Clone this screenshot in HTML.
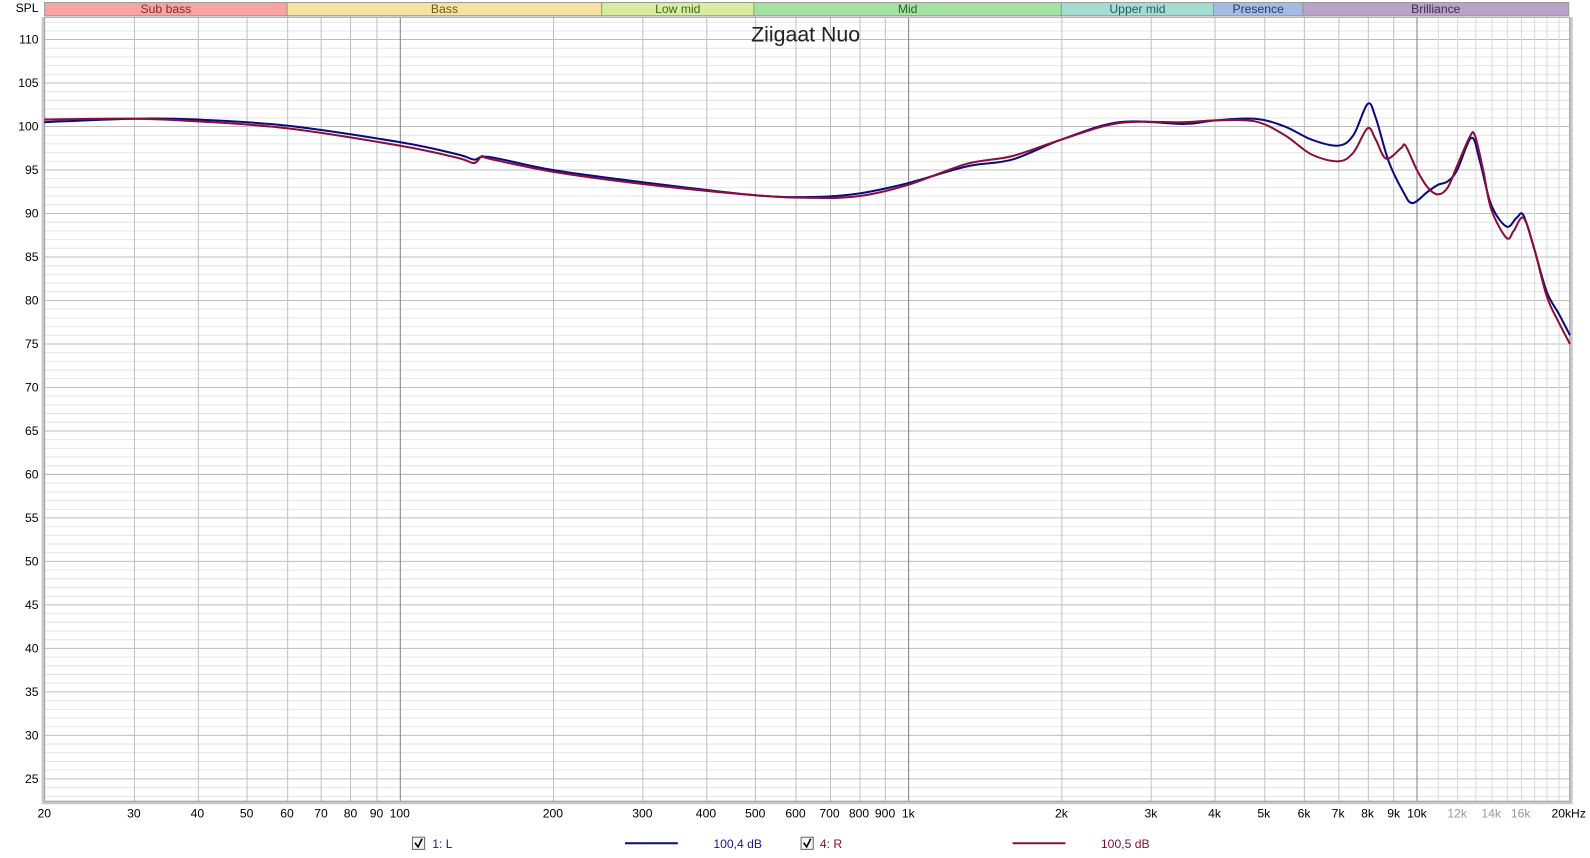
<!DOCTYPE html>
<html><head><meta charset="utf-8"><style>
body{margin:0;width:1590px;height:858px;background:#fff;overflow:hidden;font-family:"Liberation Sans",sans-serif}
svg{position:absolute;left:0;top:0}
</style></head><body>
<svg id="s" width="1590" height="858" viewBox="0 0 1567 846" preserveAspectRatio="none" xmlns="http://www.w3.org/2000/svg" font-family="Liberation Sans, sans-serif"></svg>
<script>
const DEC=501.2;
function fx(f){return 394+(Math.log10(f)-2)*DEC;}
function fy(d){return 39+(110-d)*8.576;}
let h='';
const T=17,B=790,L=44,R=1547;
h+=`<rect x="${L-3}" y="${T}" width="${R-L+6}" height="${B-T+3}" fill="#c8c8c8"/>`;
h+=`<rect x="${L}" y="${T}" width="${R-L}" height="${B-T}" fill="#fff"/>`;
for(let d=23;d<=112;d++){let y=fy(d);if(y<T||y>B)continue;
 h+=`<line x1="${L}" x2="${R}" y1="${y}" y2="${y}" stroke="${d%5==0?'#bdbdbd':'#e4e4e4'}" stroke-width="1"/>`;}
let fl=[];
for(let f=30;f<=100;f+=10)fl.push([f,f==100?2:1]);
for(let f=200;f<=1000;f+=100)fl.push([f,f==1000?2:1]);
for(let f=2000;f<=10000;f+=1000)fl.push([f,f==10000?2:1]);
for(let f=11000;f<20000;f+=1000)fl.push([f,0]);
for(const [f,t] of fl){let x=Math.round(fx(f))+0.5;
 h+=`<line x1="${x}" x2="${x}" y1="${T}" y2="${B}" stroke="${t==2?'#808080':t==1?'#c0c0c0':'#dadada'}" stroke-width="1"/>`;}
h+=`<rect x="${L}" y="${T}" width="${R-L}" height="${B-T}" fill="none" stroke="#a0a0a0"/>`;
for(let d=25;d<=110;d+=5)h+=`<text x="38" y="${fy(d)+4}" font-size="12" text-anchor="end" fill="#000">${d}</text>`;
h+=`<text x="38" y="12" font-size="12" text-anchor="end">SPL</text>`;
const xl=[[20,'20'],[30,'30'],[40,'40'],[50,'50'],[60,'60'],[70,'70'],[80,'80'],[90,'90'],[100,'100'],[200,'200'],[300,'300'],[400,'400'],[500,'500'],[600,'600'],[700,'700'],[800,'800'],[900,'900'],[1000,'1k'],[2000,'2k'],[3000,'3k'],[4000,'4k'],[5000,'5k'],[6000,'6k'],[7000,'7k'],[8000,'8k'],[9000,'9k'],[10000,'10k'],[12000,'12k',1],[14000,'14k',1],[16000,'16k',1]];
for(const a of xl)h+=`<text x="${fx(a[0])}" y="806" font-size="12" text-anchor="middle" fill="${a[2]?'#999':'#000'}">${a[1]}</text>`;
h+=`<text x="1546" y="806" font-size="12" text-anchor="middle">20kHz</text>`;
const bands=[[44,283,'#f9a3a3','Sub bass','#7a3030'],[283,593,'#f8e2a2','Bass','#6a5a20'],[593,743,'#d9eda0','Low mid','#4a6020'],[743,1046,'#a4e2a4','Mid','#2a602a'],[1046,1196,'#a4dcd2','Upper mid','#206058'],[1196,1284,'#a4bce2','Presence','#203a70'],[1284,1546,'#b8a2c8','Brilliance','#402a58']];
for(const b of bands){h+=`<rect x="${b[0]}" y="2.5" width="${b[1]-b[0]}" height="13" fill="${b[2]}" stroke="#999" stroke-width="1"/>`;
 h+=`<text x="${(b[0]+b[1])/2}" y="13" font-size="12" text-anchor="middle" fill="${b[4]}">${b[3]}</text>`;}
h+=`<text x="794" y="41" font-size="21" text-anchor="middle" fill="#222">Ziigaat Nuo</text>`;
function path(p){let pts=p.map(a=>[fx(a[0]),fy(a[1])]);let d=`M${pts[0][0]},${pts[0][1]}`;
 for(let i=0;i<pts.length-1;i++){const p0=pts[Math.max(0,i-1)],p1=pts[i],p2=pts[i+1],p3=pts[Math.min(pts.length-1,i+2)];
 d+=` C${p1[0]+(p2[0]-p0[0])/6},${p1[1]+(p2[1]-p0[1])/6} ${p2[0]-(p3[0]-p1[0])/6},${p2[1]-(p3[1]-p1[1])/6} ${p2[0]},${p2[1]}`;}return d;}
const blue=[[20,100.5],[30,100.9],[40,100.8],[60,100.1],[100,98.2],[130,96.8],[140,96.2],[150,96.5],[200,95.0],[300,93.6],[500,92.1],[650,91.9],[800,92.3],[1000,93.5],[1300,95.4],[1600,96.2],[2000,98.5],[2600,100.5],[3500,100.3],[4000,100.7],[4800,100.9],[5500,100],[6200,98.5],[7000,97.8],[7500,99],[8000,102.6],[8300,101],[8800,96],[9400,92.5],[9800,91.2],[10500,92.5],[11000,93.3],[11500,93.7],[12000,95],[12800,98.7],[13300,96],[14000,91],[15000,88.5],[15700,89.5],[16200,89.8],[17000,86],[18000,81],[19000,78.5],[20000,76]];
const red=[[20,100.8],[30,100.9],[40,100.6],[60,99.8],[100,97.8],[130,96.4],[140,95.8],[145,96.6],[150,96.3],[200,94.8],[300,93.4],[500,92.1],[650,91.8],[800,92.0],[1000,93.3],[1300,95.7],[1600,96.6],[2000,98.5],[2600,100.4],[3500,100.5],[4000,100.7],[4800,100.6],[5500,99],[6200,96.8],[7000,96],[7500,97],[8000,99.8],[8300,98.5],[8700,96.3],[9300,97.5],[9500,97.8],[10000,95],[10500,93],[11000,92.2],[11500,93],[12000,95.5],[12700,98.8],[13000,99],[13500,95],[14000,90.5],[15000,87.2],[15500,88],[16200,89.5],[17000,86],[18000,80.5],[19000,77.5],[20000,75]];
h+=`<path d="${path(blue)}" fill="none" stroke="#0a0a80" stroke-width="2"/>`;
h+=`<path d="${path(red)}" fill="none" stroke="#8a0f3a" stroke-width="2"/>`;
h+=`<rect x="406.5" y="825.5" width="12" height="12" fill="#f4f4f4" stroke="#666"/><path d="M409,831 l3,4 l4,-8" fill="none" stroke="#000" stroke-width="1.6"/>`;
h+=`<text x="426" y="836" font-size="12" fill="#1a1a80">1: L</text>`;
h+=`<line x1="616" x2="668" y1="831.5" y2="831.5" stroke="#0a0a80" stroke-width="2"/>`;
h+=`<text x="703" y="836" font-size="12" fill="#1a1a80">100,4 dB</text>`;
h+=`<rect x="789.5" y="825.5" width="12" height="12" fill="#f4f4f4" stroke="#666"/><path d="M792,831 l3,4 l4,-8" fill="none" stroke="#000" stroke-width="1.6"/>`;
h+=`<text x="808" y="836" font-size="12" fill="#7a1030">4: R</text>`;
h+=`<line x1="998" x2="1050" y1="831.5" y2="831.5" stroke="#8a0f3a" stroke-width="2"/>`;
h+=`<text x="1085" y="836" font-size="12" fill="#7a1030">100,5 dB</text>`;
document.getElementById('s').innerHTML=h;
</script>
</body></html>
